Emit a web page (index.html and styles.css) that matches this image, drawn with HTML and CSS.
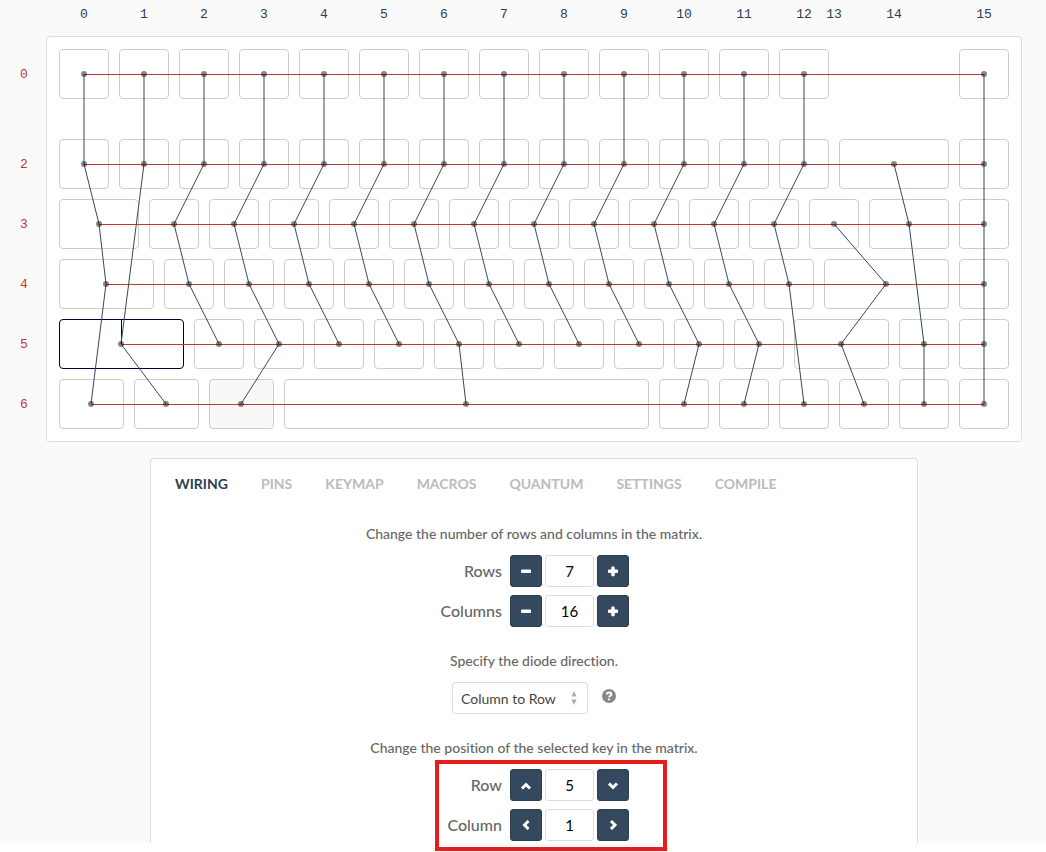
FILE: index.html
```html
<!DOCTYPE html>
<html lang="en">
<head>
<meta charset="utf-8">
<title>Keyboard wiring</title>
<link rel="stylesheet" href="styles.css">
</head>
<body>
<main class="page">
  <section class="board" aria-label="Key matrix">
    <div class="keys">
      <div class="key-row function-row">
        <button class="key"></button><button class="key"></button><button class="key"></button><button class="key"></button><button class="key"></button><button class="key"></button><button class="key"></button><button class="key"></button><button class="key"></button><button class="key"></button><button class="key"></button><button class="key"></button><button class="key"></button><button class="key last"></button>
      </div>
      <div class="key-row">
        <button class="key"></button><button class="key"></button><button class="key"></button><button class="key"></button><button class="key"></button><button class="key"></button><button class="key"></button><button class="key"></button><button class="key"></button><button class="key"></button><button class="key"></button><button class="key"></button><button class="key"></button><button class="key u200"></button><button class="key"></button>
      </div>
      <div class="key-row">
        <button class="key u150"></button><button class="key"></button><button class="key"></button><button class="key"></button><button class="key"></button><button class="key"></button><button class="key"></button><button class="key"></button><button class="key"></button><button class="key"></button><button class="key"></button><button class="key"></button><button class="key"></button><button class="key u150"></button><button class="key"></button>
      </div>
      <div class="key-row">
        <button class="key u175"></button><button class="key"></button><button class="key"></button><button class="key"></button><button class="key"></button><button class="key"></button><button class="key"></button><button class="key"></button><button class="key"></button><button class="key"></button><button class="key"></button><button class="key"></button><button class="key u225"></button><button class="key"></button>
      </div>
      <div class="key-row">
        <button class="key u225 selected"></button><button class="key"></button><button class="key"></button><button class="key"></button><button class="key"></button><button class="key"></button><button class="key"></button><button class="key"></button><button class="key"></button><button class="key"></button><button class="key"></button><button class="key u175"></button><button class="key"></button><button class="key"></button>
      </div>
      <div class="key-row">
        <button class="key u125"></button><button class="key u125"></button><button class="key u125 hovered"></button><button class="key u625"></button><button class="key"></button><button class="key"></button><button class="key"></button><button class="key"></button><button class="key"></button><button class="key"></button>
      </div>
      <svg class="wires" viewBox="0 0 950 380">
        <defs>
          <marker id="dot" markerUnits="userSpaceOnUse" markerWidth="8" markerHeight="8" refX="4" refY="4">
            <circle class="dot" cx="4" cy="4" r="3"/>
          </marker>
        </defs>
        <g class="row-wires">
          <path d="M25 25.500H925M25 115.500H925M40 175.500H925M47 235.500H925M62 295.500H925M32 355.500H925"/>
        </g>
        <path class="selected-wire" d="M62.500 271V295"/>
        <g class="column-wires">
          <polyline points="25,25 25,115 40,175 47,235 32,355"/>
          <polyline points="85,25 85,115 62,295 107,355"/>
          <polyline points="145,25 145,115 115,175 130,235 160,295"/>
          <polyline points="205,25 205,115 175,175 190,235 220,295 182,355"/>
          <polyline points="265,25 265,115 235,175 250,235 280,295"/>
          <polyline points="325,25 325,115 295,175 310,235 340,295"/>
          <polyline points="385,25 385,115 355,175 370,235 400,295 407,355"/>
          <polyline points="445,25 445,115 415,175 430,235 460,295"/>
          <polyline points="505,25 505,115 475,175 490,235 520,295"/>
          <polyline points="565,25 565,115 535,175 550,235 580,295"/>
          <polyline points="625,25 625,115 595,175 610,235 640,295 625,355"/>
          <polyline points="685,25 685,115 655,175 670,235 700,295 685,355"/>
          <polyline points="745,25 745,115 715,175 730,235 745,355"/>
          <polyline points="775,175 827,235 782,295 805,355"/>
          <polyline points="835,115 850,175 865,295 865,355"/>
          <polyline points="925,25 925,115 925,175 925,235 925,295 925,355"/>
        </g>
        <g class="column-labels">
          <text x="25" y="-31">0</text><text x="85" y="-31">1</text><text x="145" y="-31">2</text><text x="205" y="-31">3</text>
          <text x="265" y="-31">4</text><text x="325" y="-31">5</text><text x="385" y="-31">6</text><text x="445" y="-31">7</text>
          <text x="505" y="-31">8</text><text x="565" y="-31">9</text><text x="625" y="-31">10</text><text x="685" y="-31">11</text>
          <text x="745" y="-31">12</text><text x="775" y="-31">13</text><text x="835" y="-31">14</text><text x="925" y="-31">15</text>
        </g>
        <g class="row-labels">
          <text x="-35" y="29">0</text><text x="-35" y="119">2</text><text x="-35" y="179">3</text>
          <text x="-35" y="239">4</text><text x="-35" y="299">5</text><text x="-35" y="359">6</text>
        </g>
      </svg>
    </div>
  </section>

  <section class="settings">
    <nav class="tabs">
      <a class="tab active" href="#wiring">WIRING</a>
      <a class="tab" href="#pins">PINS</a>
      <a class="tab" href="#keymap">KEYMAP</a>
      <a class="tab" href="#macros">MACROS</a>
      <a class="tab" href="#quantum">QUANTUM</a>
      <a class="tab" href="#settings">SETTINGS</a>
      <a class="tab" href="#compile">COMPILE</a>
    </nav>

    <div class="group">
      <p class="hint">Change the number of rows and columns in the matrix.</p>
      <div class="fields">
        <div class="field">
          <label for="rows">Rows</label>
          <button class="step" aria-label="Fewer rows"><svg class="icon" viewBox="0 0 14 14"><path class="solid" d="M3 5.500h8q1 0 1 1v1.500q0 1-1 1H3q-1 0-1-1V6.500q0-1 1-1z"/></svg></button>
          <input id="rows" type="text" value="7">
          <button class="step" aria-label="More rows"><svg class="icon" viewBox="0 0 14 14"><path class="solid" d="M6.300 2.500h1.400q1 0 1 1v2h2.300q1 0 1 1v1.400q0 1-1 1H8.700v2.300q0 1-1 1H6.300q-1 0-1-1V8.900H3q-1 0-1-1V6.500q0-1 1-1h2.300v-2q0-1 1-1z"/></svg></button>
        </div>
        <div class="field">
          <label for="columns">Columns</label>
          <button class="step" aria-label="Fewer columns"><svg class="icon" viewBox="0 0 14 14"><path class="solid" d="M3 5.500h8q1 0 1 1v1.500q0 1-1 1H3q-1 0-1-1V6.500q0-1 1-1z"/></svg></button>
          <input id="columns" type="text" value="16">
          <button class="step" aria-label="More columns"><svg class="icon" viewBox="0 0 14 14"><path class="solid" d="M6.300 2.500h1.400q1 0 1 1v2h2.300q1 0 1 1v1.400q0 1-1 1H8.700v2.300q0 1-1 1H6.300q-1 0-1-1V8.900H3q-1 0-1-1V6.500q0-1 1-1h2.300v-2q0-1 1-1z"/></svg></button>
        </div>
      </div>
    </div>

    <div class="group">
      <p class="hint" id="diode-hint">Specify the diode direction.</p>
      <div class="diode">
        <div class="select-box">
          <select aria-labelledby="diode-hint"><option>Column to Row</option><option>Row to Column</option></select>
          <svg class="arrows" viewBox="0 0 6 14"><path d="M3 0L5.500 5.500H.500zM3 14L.500 8.500h5z"/></svg>
        </div>
        <button class="help" aria-label="Help"><svg viewBox="0 0 14 14"><circle cx="7" cy="7" r="7"/><path d="M4.700 5.400Q5 3.400 7.100 3.400 9.300 3.400 9.300 5.200 9.300 6.200 8.200 6.800 7.100 7.300 7.100 8.300M7.100 9.500V11.300"/></svg></button>
      </div>
    </div>

    <div class="group">
      <p class="hint">Change the position of the selected key in the matrix.</p>
      <div class="fields highlighted">
        <div class="field">
          <label for="row">Row</label>
          <button class="step" aria-label="Row up"><svg class="icon" viewBox="0 0 14 14"><path class="chevron" d="M3 10.500l4-4 4 4"/></svg></button>
          <input id="row" type="text" value="5">
          <button class="step" aria-label="Row down"><svg class="icon" viewBox="0 0 14 14"><path class="chevron" d="M3 5.500l4 4 4-4"/></svg></button>
        </div>
        <div class="field">
          <label for="column">Column</label>
          <button class="step" aria-label="Column left"><svg class="icon" viewBox="0 0 14 14"><path class="chevron" d="M9.500 3l-4 4 4 4"/></svg></button>
          <input id="column" type="text" value="1">
          <button class="step" aria-label="Column right"><svg class="icon" viewBox="0 0 14 14"><path class="chevron" d="M5 3l4 4-4 4"/></svg></button>
        </div>
      </div>
    </div>
  </section>
</main>
</body>
</html>
```
FILE: styles.css
```css
* { box-sizing: border-box; }
html { background: #fff; }
body {
  min-height: 100vh;
  margin: 0;
  font-family: Lato, sans-serif;
  font-weight: 500;
  font-variant-ligatures: none;
  color: #666;
}
button { padding: 0; cursor: pointer; }

.page {
  padding: 36px 24px 0 46px;
  background: #fafafa;
}

/* Key matrix */
.board {
  width: fit-content;
  margin: 0 auto 16px;
  padding: 12px;
  background: #fff;
  border: 1px solid #ddd;
  border-radius: 4px;
}
.keys {
  position: relative;
  display: flex;
  flex-direction: column;
  gap: 10px;
}
.key-row { display: flex; gap: 10px; }
.function-row { margin-bottom: 30px; }
.key {
  width: 50px;
  height: 50px;
  background: #fff;
  border: 1px solid #ccc;
  border-radius: 4px;
}
.last { margin-left: auto; }
.u125 { width: 65px; }
.u150 { width: 80px; }
.u175 { width: 95px; }
.u200 { width: 110px; }
.u225 { width: 125px; }
.u625 { width: 365px; }
.selected { border-color: #003; }
.hovered { background: #f8f8f8; }

.wires {
  position: absolute;
  inset: 0;
  width: 100%;
  height: 100%;
  overflow: visible;
  pointer-events: none;
}
.row-wires path { stroke: #c0392b; }
.selected-wire { stroke: #000; }
.column-wires polyline {
  fill: none;
  stroke: #34495e;
  marker: url(#dot);
}
.dot { fill: #111; fill-opacity: .5; }
.wires text {
  font: 13px "Liberation Mono", monospace;
  text-anchor: middle;
}
.column-labels { fill: #2c3e50; }
.row-labels { fill: #c0392b; }

/* Settings panel */
.settings {
  max-width: 768px;
  margin: 0 auto;
  padding: 15px 24px 2px;
  background: #fff;
  border: 1px solid #ddd;
  border-bottom: 0;
  border-radius: 4px 4px 0 0;
}
.tabs {
  display: flex;
  gap: 33px;
  margin-bottom: 29px;
}
.tab {
  font-size: 14px;
  font-weight: bold;
  line-height: 20px;
  color: #bbb;
  text-decoration: none;
}
.tab.active { color: #2c3e50; }

.group {
  display: flex;
  flex-direction: column;
  align-items: center;
}
.group + .group { margin-top: 23px; }
.hint {
  margin: 0 0 10px;
  font-size: 14px;
  line-height: 22px;
}
.fields {
  position: relative;
  display: grid;
  gap: 8px;
}
.field {
  display: grid;
  grid-template-columns: 68px 32px 49px 32px;
  column-gap: 3px;
  align-items: center;
}
.field label {
  padding-right: 5px;
  font-size: 16px;
  line-height: 32px;
  text-align: right;
}
.field input {
  width: 100%;
  height: 32px;
  padding: 0;
  font: 15px Lato, sans-serif;
  color: #000;
  text-align: center;
  background: #fff;
  border: 1px solid #ddd;
  border-radius: 3px;
}
.step {
  display: grid;
  place-items: center;
  width: 32px;
  height: 32px;
  background: #34495e;
  border: 1px solid #2c3e50;
  border-radius: 3px;
}
.icon { width: 14px; height: 14px; }
.solid { fill: #fff; }
.chevron { fill: none; stroke: #fff; stroke-width: 3; }

.highlighted::after {
  content: "";
  position: absolute;
  inset: -9px -38px -10px -4px;
  border: 4px solid #e81c1c;
  pointer-events: none;
}

.diode {
  display: flex;
  gap: 14px;
}
.select-box { position: relative; }
.select-box select {
  appearance: none;
  width: 136px;
  height: 32px;
  padding: 0 8px;
  font: 14px Lato, sans-serif;
  color: #444;
  background: #fff;
  border: 1px solid #ddd;
  border-radius: 3px;
}
.arrows {
  position: absolute;
  top: 9px;
  right: 11px;
  width: 6px;
  height: 14px;
  fill: #aaa;
  pointer-events: none;
}
.help {
  width: 14px;
  height: 28px;
  background: none;
  border: 0;
}
.help svg { display: block; width: 14px; height: 14px; fill: #888; }
.help path { fill: none; stroke: #fff; stroke-width: 2; }
```
